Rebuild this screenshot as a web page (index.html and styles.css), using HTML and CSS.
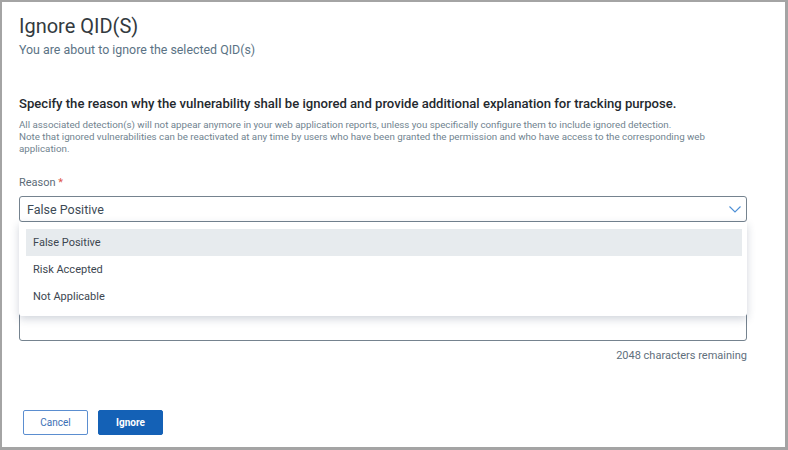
FILE: index.html
```html
<!DOCTYPE html>
<html>

<head>
    <meta charset="UTF-8">
    <title>Ignore QID(S)</title>
    <link rel="stylesheet" href="styles.css">
</head>

<body>
    <div class="dialog">
        <div class="header">
            <h1 class="title">Ignore QID(S)</h1>
            <p class="subtitle">You are about to ignore the selected QID(s)</p>
        </div>

        <div class="content">
            <h2 class="lead">Specify the reason why the vulnerability shall be ignored and provide additional explanation for tracking purpose.</h2>
            <p class="note">
                All associated detection(s) will not appear anymore in your web application reports, unless you specifically configure them to include ignored detection.
                <br>
                Note that ignored vulnerabilities can be reactivated at any time by users who have been granted the permission and who have access to the corresponding web application.
            </p>

            <label class="field-label">Reason <span class="req">*</span></label>
            <div class="select-wrap">
                <div class="select">
                    <span>False Positive</span>
                    <svg class="chevron" width="12" height="7" viewBox="0 0 12 7">
                        <path d="M0.5 0.5 L6 6 L11.5 0.5" fill="none" stroke="#4d8fd6" stroke-width="1.1" />
                    </svg>
                </div>
                <ul class="menu">
                    <li class="active">False Positive</li>
                    <li>Risk Accepted</li>
                    <li>Not Applicable</li>
                </ul>
            </div>

            <div class="textarea"></div>
            <div class="counter">2048 characters remaining</div>
        </div>

        <div class="footer">
            <button class="btn btn-cancel">Cancel</button>
            <button class="btn btn-primary">Ignore</button>
        </div>
    </div>
</body>

</html>
```

FILE: styles.css
```css
html,
body {
    margin: 0;
    padding: 0;
    background: #fff;
}

.dialog {
    box-sizing: border-box;
    width: 788px;
    height: 450px;
    border-style: solid;
    border-color: #a4a4a4;
    border-width: 2px 3px 3px 2px;
    font-family: Roboto, "Liberation Sans", sans-serif;
    padding: 0 38px 0 17px;
}

.header {
    padding-top: 11px;
}

.title {
    margin: 0;
    font-size: 20px;
    font-weight: 400;
    color: #333a40;
    line-height: 26px;
}

.subtitle {
    margin: 3px 0 0;
    font-size: 12.4px;
    color: #5b7385;
    line-height: 16px;
}

.content {
    padding-top: 37px;
}

.lead {
    margin: 0;
    font-size: 13.1px;
    font-weight: 500;
    color: #24292e;
    line-height: 18px;
}

.note {
    margin: 6px 0 0;
    font-size: 9.75px;
    line-height: 12px;
    color: #70838f;
}

.field-label {
    display: block;
    margin-top: 21px;
    font-size: 11px;
    color: #5c6b78;
    line-height: 14px;
}

.req {
    color: #e0554b;
}

.select-wrap {
    position: relative;
    margin-top: 6px;
}

.select {
    box-sizing: border-box;
    height: 26px;
    border: 1px solid #75838f;
    border-radius: 3px;
    display: flex;
    align-items: center;
    justify-content: space-between;
    padding: 0 5px 0 7px;
    font-size: 12.5px;
    color: #3d4a55;
}

.menu {
    position: absolute;
    left: 0;
    right: 0;
    top: 26px;
    margin: 0;
    list-style: none;
    background: #fff;
    padding: 7px 5px 6px 7px;
    box-shadow: 0 3px 9px rgba(40, 60, 90, 0.22);
    border-radius: 0 0 3px 3px;
    z-index: 2;
}

.menu li {
    height: 27px;
    line-height: 27px;
    padding-left: 7px;
    font-size: 11px;
    color: #3c4650;
}

.menu li.active {
    background: #e7ebee;
}

.textarea {
    box-sizing: border-box;
    height: 101px;
    margin-top: 18px;
    border: 1px solid #75838f;
    border-radius: 3px;
}

.counter {
    text-align: right;
    margin-top: 8px;
    font-size: 11px;
    color: #5f6f7c;
    line-height: 14px;
}

.footer {
    margin-top: 47px;
    padding-left: 4px;
    display: flex;
    gap: 10px;
}

.btn {
    box-sizing: border-box;
    width: 65px;
    height: 25px;
    border-radius: 2px;
    font-family: Roboto, "Liberation Sans", sans-serif;
    font-size: 10px;
    padding: 0;
}

.btn-cancel {
    background: #fff;
    border: 1px solid #5b8ed0;
    color: #3b6fb5;
}

.btn-primary {
    background: #1461b6;
    border: 1px solid #1461b6;
    color: #fff;
    font-weight: 700;
}
```
